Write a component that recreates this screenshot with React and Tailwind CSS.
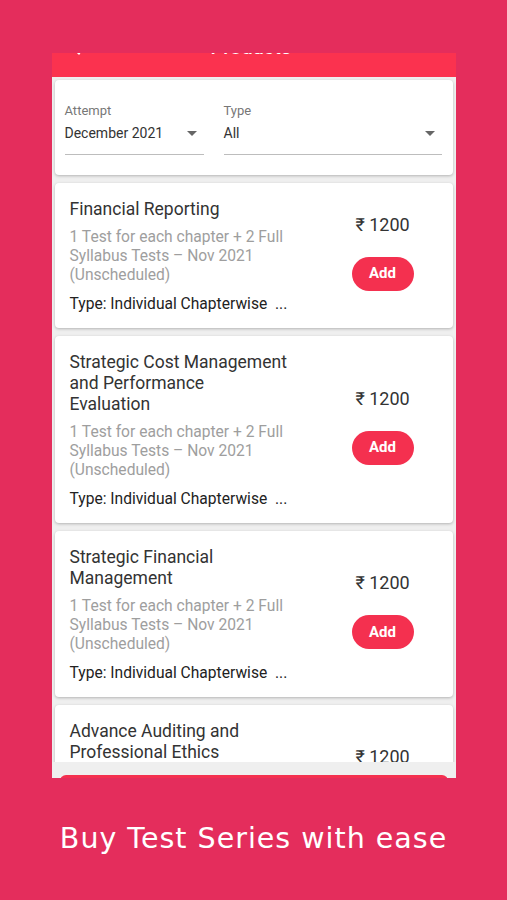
import { ArrowLeft } from 'lucide-react'

const products = [
	{ title: 'Financial Reporting' },
	{ title: 'Strategic Cost Management and Performance Evaluation' },
	{ title: 'Strategic Financial Management' },
	{ title: 'Advance Auditing and Professional Ethics' },
]

function Select({ label, value, className }) {
	return (
		<div className={className}>
			<div className="text-[13px] leading-[16px] text-[#777]">{label}</div>
			<div className="flex items-center justify-between mt-[5px] pb-[12px] border-b border-[#bdbdbd]">
				<span className="text-[14px] leading-[18px] text-[#333]">{value}</span>
				<svg width="10" height="5" viewBox="0 0 10 5" className="mr-[7px]">
					<path d="M0 0h10L5 5z" fill="#666" />
				</svg>
			</div>
		</div>
	)
}

function ProductCard({ title }) {
	return (
		<div className="bg-white rounded-[4px] shadow-[0_1px_3px_rgba(0,0,0,0.25)] flex items-center pl-[15px] pt-[16px] pb-[14px]">
			<div className="w-[218px]">
				<div className="text-[17.5px] leading-[21px] text-[#333]">{title}</div>
				<div className="mt-[8px] text-[15.6px] leading-[19px] text-[#9e9e9e]">
					1 Test for each chapter + 2 Full Syllabus Tests – Nov 2021 (Unscheduled)
				</div>
				<div className="mt-[10px] text-[15.6px] leading-[19px] text-[#222] whitespace-nowrap">
					Type: Individual Chapterwise &nbsp;...
				</div>
			</div>
			<div className="ml-auto mr-[39px] mb-[9px] w-[62px] flex flex-col items-center">
				<div className="text-[18px] leading-[22px] text-[#333] whitespace-nowrap">₹ 1200</div>
				<button className="mt-[21px] w-[62px] h-[34px] rounded-full bg-[#f4304f] text-white text-[15px] font-bold">
					Add
				</button>
			</div>
		</div>
	)
}

export default function App() {
	return (
		<div className="w-[507px] h-[900px] bg-[#e42d5c] flex flex-col items-center pt-[53px] font-['Roboto',sans-serif]">
			<div className="w-[404px] h-[725px] bg-[#efefef] flex flex-col overflow-hidden">
				<div className="h-[24px] shrink-0 bg-[#fb324f] overflow-hidden">
					<div className="-mt-[34px] h-[56px] flex items-center px-[16px] text-white">
						<ArrowLeft size={22} strokeWidth={2.5} />
						<span className="ml-[121px] text-[20px] font-medium">Products</span>
					</div>
				</div>
				<div className="h-[685px] shrink-0 overflow-hidden px-[3px] pt-[3px] flex flex-col gap-[8px]">
					<div className="bg-white rounded-[4px] shadow-[0_1px_3px_rgba(0,0,0,0.25)] h-[95px] shrink-0 flex gap-[20px] px-[10px] pt-[23px]">
						<Select label="Attempt" value="December 2021" className="w-[139px]" />
						<Select label="Type" value="All" className="w-[218px]" />
					</div>
					{products.map((p) => (
						<div key={p.title} className="shrink-0">
							<ProductCard title={p.title} />
						</div>
					))}
				</div>
				<div className="shrink-0 pt-[13px] px-[8px]">
					<div className="h-[48px] rounded-[6px] bg-[#f4304f]" />
				</div>
			</div>
			<div className="mt-[40px] text-white text-[28.5px] tracking-[1px] font-['DejaVu_Sans',sans-serif]">
				Buy Test Series with ease
			</div>
		</div>
	)
}
